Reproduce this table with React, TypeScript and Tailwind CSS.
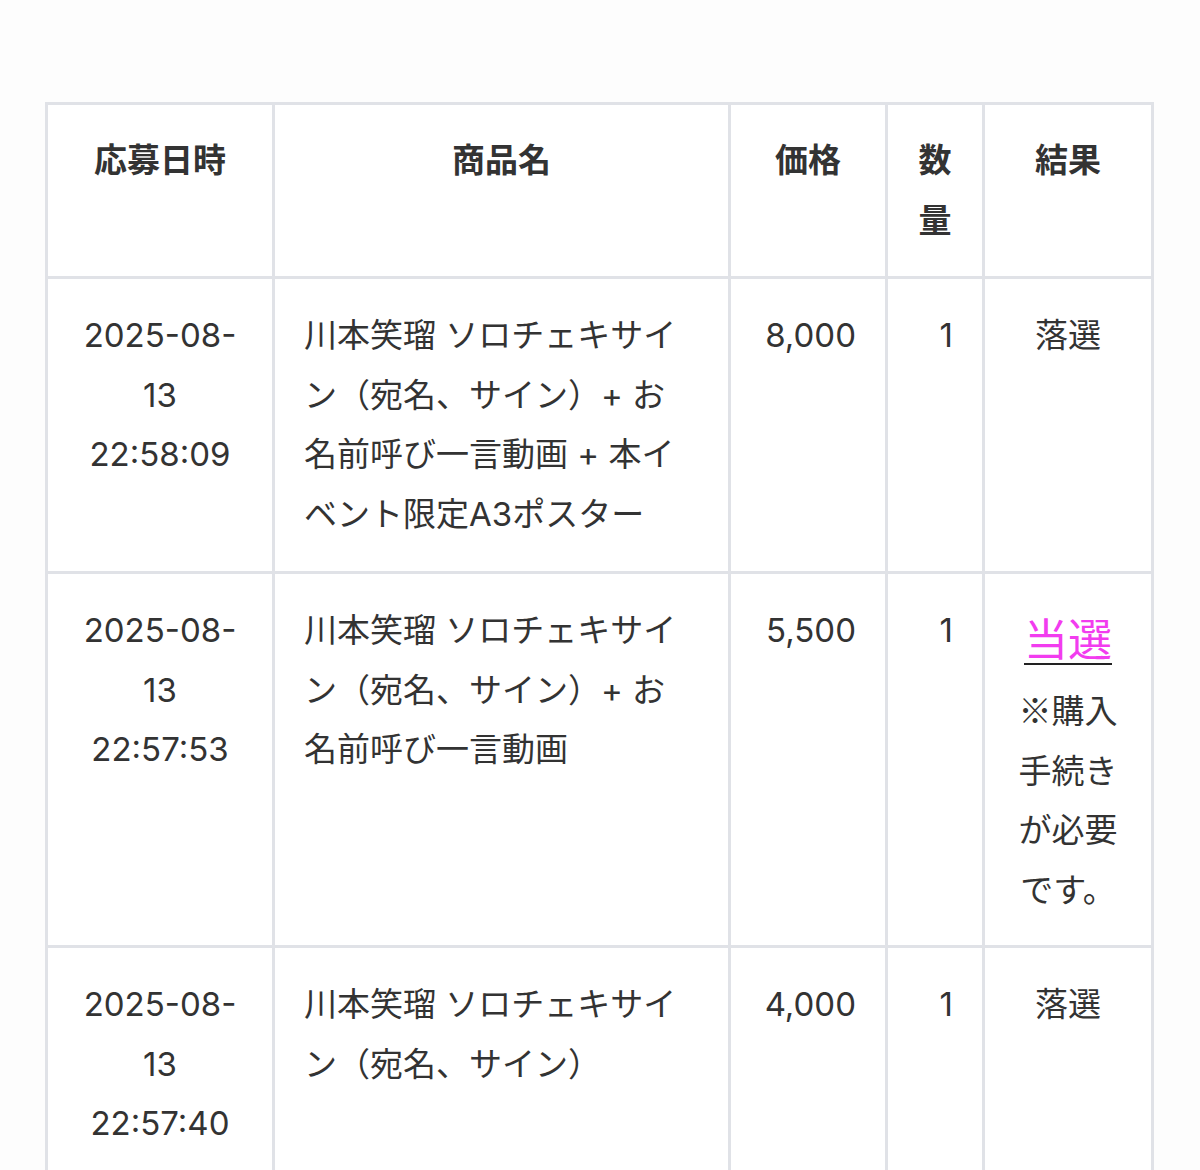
type Entry = {
  date: string;
  name: string;
  price: string;
  qty: number;
  won: boolean;
};

const entries: Entry[] = [
  {
    date: "2025-08-13 22:58:09",
    name: "川本笑瑠 ソロチェキサイン（宛名、サイン）+ お名前呼び一言動画 + 本イベント限定A3ポスター",
    price: "8,000",
    qty: 1,
    won: false,
  },
  {
    date: "2025-08-13 22:57:53",
    name: "川本笑瑠 ソロチェキサイン（宛名、サイン）+ お名前呼び一言動画",
    price: "5,500",
    qty: 1,
    won: true,
  },
  {
    date: "2025-08-13 22:57:40",
    name: "川本笑瑠 ソロチェキサイン（宛名、サイン）",
    price: "4,000",
    qty: 1,
    won: false,
  },
];

const th = "border-[3px] border-[#e0e2e7] px-[29px] py-[26px] align-top text-center";
const td = "border-[3px] border-[#e0e2e7] px-[29px] py-[27px] align-top";

export default function App() {
  return (
    <div
      className="min-h-screen bg-[#fdfdfd] pt-[102px] pl-[45px] text-[33px] leading-[59.5px] text-[#333]"
      style={{ fontFamily: 'Inter, "Noto Sans CJK JP", sans-serif' }}
    >
      <table className="w-[1106px] table-fixed border-collapse bg-white">
        <colgroup>
          <col className="w-[227px]" />
          <col className="w-[456px]" />
          <col className="w-[157px]" />
          <col className="w-[97px]" />
          <col className="w-[169px]" />
        </colgroup>
        <thead>
          <tr className="font-bold">
            <th className={th}>応募日時</th>
            <th className={th}>商品名</th>
            <th className={th}>価格</th>
            <th className={th}>数量</th>
            <th className={th}>結果</th>
          </tr>
        </thead>
        <tbody>
          {entries.map((e) => (
            <tr key={e.date}>
              <td className={td + " text-center"}>{e.date}</td>
              <td className={td + " pr-[40px]"}>{e.name}</td>
              <td className={td + " text-right"}>{e.price}</td>
              <td className={td + " text-right"}>{e.qty}</td>
              <td className={td + " text-center"}>
                {e.won ? (
                  <>
                    <a
                      href="#"
                      className="block text-[44px] leading-[79px] text-[#f23cef] underline decoration-[#222] decoration-2 underline-offset-[7px]"
                    >
                      当選
                    </a>
                    <p className="font-['Noto_Sans_CJK_JP']">※購入手続きが必要です。</p>
                  </>
                ) : (
                  "落選"
                )}
              </td>
            </tr>
          ))}
        </tbody>
      </table>
    </div>
  );
}
